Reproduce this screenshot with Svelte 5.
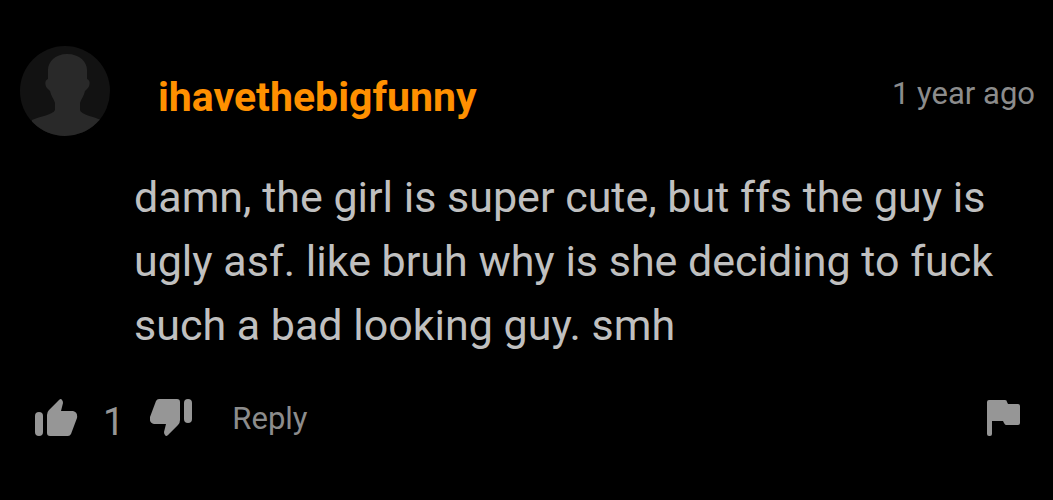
<script>
  let vote = $state(0);
</script>

{#snippet thumb()}
  <rect x="0" y="13" width="8" height="24" rx="4" />
  <path d="M12 34V16Q12 13 14 11L24 1Q26 -1 27 1Q28 2 28 4L26 12H38Q43 13 42 19L36 35Q35 37 33 37H15Q12 37 12 34Z" />
{/snippet}

<article class="comment">
  <header>
    <svg class="avatar" viewBox="0 0 90 90" aria-hidden="true">
      <defs><clipPath id="disc"><circle cx="45" cy="45" r="45" /></clipPath></defs>
      <g clip-path="url(#disc)">
        <rect width="90" height="90" fill="#121212" />
        <path fill="#292929" d="M47 8C35 8 28 16 28 24V33C24 34 25 41 28 43L30 45C31 50 34 53 35 57V64C33 69 20 70 12 74V90H81V74C73 70 61 69 60 64V57C61 53 64 50 65 45L67 43C70 41 71 34 67 33V24C67 16 60 8 47 8Z" />
      </g>
    </svg>
    <a class="name" href="#profile">ihavethebigfunny</a>
    <time>1 year ago</time>
  </header>
  <p>damn, the girl is super cute, but ffs the guy is ugly asf. like bruh why is she deciding to fuck such a bad looking guy. smh</p>
  <footer>
    <button aria-label="Like" aria-pressed={vote === 1} onclick={() => (vote = 1)}>
      <svg width="43" height="38" viewBox="0 0 43 38">{@render thumb()}</svg>
    </button>
    <span class="count">1</span>
    <button aria-label="Dislike" aria-pressed={vote === -1} onclick={() => (vote = -1)}>
      <svg width="43" height="38" viewBox="0 0 43 38"><g transform="rotate(180 21 18.5)">{@render thumb()}</g></svg>
    </button>
    <button class="reply">Reply</button>
    <button class="flag" aria-label="Report">
      <svg width="33" height="38" viewBox="0 0 33 38"><path d="M2 1H18Q20 1 20 3L21 5H31Q33 5 33 7V24Q33 26 31 26H19Q18 26 17 24L16 22H5V35Q5 37 3 37H2Q0 37 0 35V3Q0 1 2 1Z" /></svg>
    </button>
  </footer>
</article>

<style>
  :global(body) { margin: 0; background: #000; }
  .comment { box-sizing: border-box; min-height: 100vh; padding: 46px 18px 32px 20px; background: #000; color: #c0c0c0; font-family: Roboto, sans-serif; }
  header { display: flex; align-items: center; height: 90px; }
  .avatar { width: 90px; height: 90px; flex: none; }
  .name { margin: 12px 0 0 48px; color: #ff9000; font-size: 41px; font-weight: 700; line-height: 48px; text-decoration: none; }
  time { margin: 6px 0 0 auto; color: #8c8c8c; font-size: 31px; line-height: 36px; }
  p { margin: 29px 16px 0 114px; font-size: 43px; line-height: 64px; }
  footer { display: flex; align-items: center; height: 48px; margin: 37px 15px 0 15px; color: #969696; }
  button { display: flex; padding: 0; border: 0; background: none; color: inherit; font: inherit; cursor: pointer; }
  svg { display: block; fill: currentColor; }
  .count { margin: 8px 26px 0 25px; font-size: 38px; line-height: 40px; }
  .reply { margin: 2px 0 0 39px; color: #8c8c8c; font-size: 31px; line-height: 36px; }
  .flag { margin-left: auto; }
</style>
